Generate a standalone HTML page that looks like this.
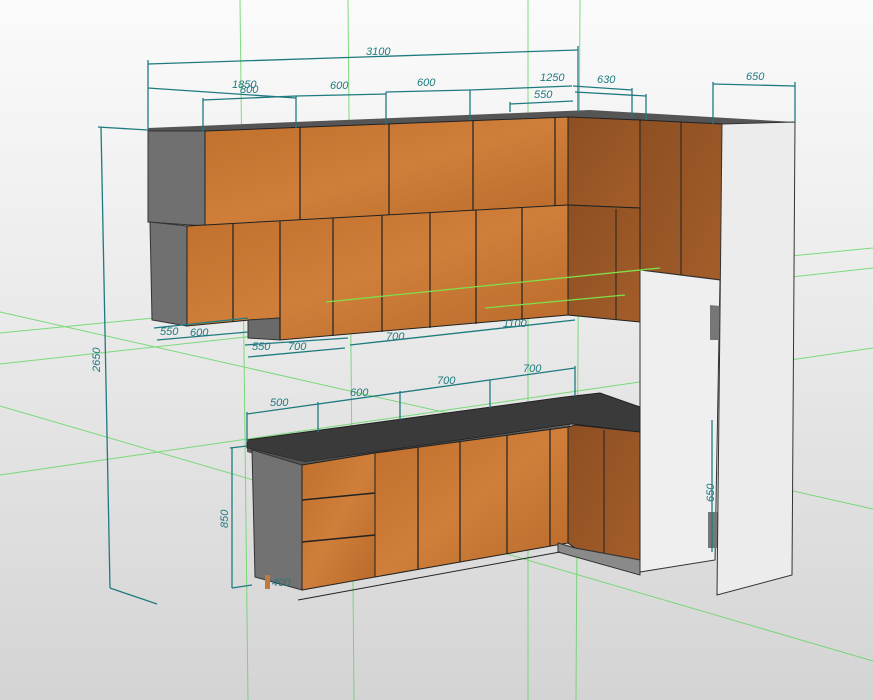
<!DOCTYPE html>
<html><head><meta charset="utf-8"><style>
html,body{margin:0;padding:0;width:873px;height:700px;overflow:hidden}
svg{display:block}
text{font-family:"Liberation Sans",sans-serif;font-size:11px;fill:#1f7a80;font-style:italic}
</style></head><body>
<svg width="873" height="700" viewBox="0 0 873 700" xmlns="http://www.w3.org/2000/svg">
<defs>
<linearGradient id="bg" x1="0" y1="0" x2="0" y2="1">
<stop offset="0" stop-color="#fbfbfb"/><stop offset="0.5" stop-color="#e8e8e8"/><stop offset="1" stop-color="#d4d4d4"/>
</linearGradient>
<linearGradient id="wood" x1="0" y1="0" x2="1" y2="1">
<stop offset="0" stop-color="#c06f2c"/><stop offset="0.5" stop-color="#cf7f3a"/><stop offset="1" stop-color="#b8692a"/>
</linearGradient>
<linearGradient id="woodd" x1="0" y1="0" x2="1" y2="1">
<stop offset="0" stop-color="#8d4f22"/><stop offset="1" stop-color="#a35d2a"/>
</linearGradient>
</defs>
<rect width="873" height="700" fill="url(#bg)"/>
<!-- green guide lines back -->
<g stroke="#5fd65f" stroke-width="1" fill="none" opacity="0.8">
<line x1="240" y1="0" x2="248" y2="700"/>
<line x1="348" y1="0" x2="354" y2="700"/>
<line x1="528" y1="0" x2="528" y2="700"/>
<line x1="580" y1="0" x2="576" y2="700"/>
<line x1="0" y1="312" x2="873" y2="509"/>
<line x1="0" y1="406" x2="873" y2="661"/>
<line x1="0" y1="333" x2="873" y2="248"/>
<line x1="0" y1="364" x2="873" y2="268"/>
<line x1="0" y1="475" x2="873" y2="348"/>
</g>
<!-- UPPER CABINETS -->
<polygon points="148,128 590,110 795,122 722,126 640,120 568,117 205,131 148,131" fill="#555"/>
<polygon points="148,131 205,131 205,226 148,222" fill="#707070" stroke="#333"/>
<polygon points="150,222 187,226 187,326 152,320" fill="#707070" stroke="#333"/>
<polygon points="205,131 568,117 568,205 205,226" fill="url(#wood)" stroke="#222"/>
<g stroke="#222" stroke-width="1.2">
<line x1="300" y1="127" x2="300" y2="221"/><line x1="389" y1="124" x2="389" y2="216"/>
<line x1="473" y1="120" x2="473" y2="211"/><line x1="555" y1="118" x2="555" y2="206"/>
</g>
<polygon points="187,226 568,205 568,315 280,340 280,318 250,320 187,326" fill="url(#wood)" stroke="#222"/>
<polygon points="248,320 280,318 280,340 248,338" fill="#6a6a6a" stroke="#333"/>
<g stroke="#222" stroke-width="1.2">
<line x1="233" y1="224" x2="233" y2="322"/><line x1="280" y1="221" x2="280" y2="340"/>
<line x1="333" y1="218" x2="333" y2="336"/><line x1="382" y1="215" x2="382" y2="332"/>
<line x1="430" y1="213" x2="430" y2="328"/><line x1="476" y1="210" x2="476" y2="324"/>
<line x1="522" y1="207" x2="522" y2="320"/>
</g>
<polygon points="568,117 640,120 640,208 568,205" fill="url(#woodd)" stroke="#222"/>
<polygon points="568,205 640,208 640,322 568,315" fill="url(#woodd)" stroke="#222"/>
<line x1="616" y1="209" x2="616" y2="320" stroke="#222"/>
<polygon points="640,120 722,124 722,280 640,270" fill="url(#woodd)" stroke="#222"/>
<line x1="681" y1="122" x2="681" y2="275" stroke="#222"/>
<!-- fridge column -->
<polygon points="640,270 720,280 715,560 640,572" fill="#efefef" stroke="#333"/>
<polygon points="710,305 720,306 720,340 710,340" fill="#777"/>
<polygon points="708,512 718,512 718,548 708,548" fill="#777"/>
<polygon points="722,124 795,122 792,575 717,595" fill="#ececec" stroke="#333"/>
<!-- BASE CABINETS -->
<polygon points="247,440 565,397 600,393 640,407 640,432 572,424 305,462 247,448" fill="#3a3a3a" stroke="#222"/>
<polygon points="247,448 305,462 570,425 570,428 305,468 247,452" fill="#555"/>
<polygon points="252,450 302,465 302,590 255,577" fill="#727272" stroke="#333"/>
<polygon points="302,465 375,453 375,577 302,590" fill="url(#wood)" stroke="#222"/>
<g stroke="#222" stroke-width="1.5"><line x1="302" y1="500" x2="375" y2="493"/><line x1="302" y1="542" x2="375" y2="535"/></g>
<polygon points="375,453 568,427 568,543 375,577" fill="url(#wood)" stroke="#222"/>
<g stroke="#222" stroke-width="1.2">
<line x1="418" y1="447" x2="418" y2="570"/><line x1="460" y1="441" x2="460" y2="562"/>
<line x1="507" y1="435" x2="507" y2="554"/><line x1="550" y1="429" x2="550" y2="546"/>
</g>
<polygon points="568,427 575,425 640,432 640,560 575,548 568,543" fill="url(#woodd)" stroke="#222"/>
<line x1="604" y1="430" x2="604" y2="555" stroke="#222"/>
<polygon points="558,543 575,548 640,560 640,575 558,552" fill="#8a8a8a" stroke="#333"/>
<polyline points="298,600 560,552" fill="none" stroke="#222"/>
<rect x="265" y="575" width="5" height="14" fill="#c07a3a"/>
<!-- dimension lines -->
<g stroke="#1f7a80" stroke-width="1.3" fill="none">
<line x1="148" y1="64" x2="578" y2="50"/><line x1="148" y1="60" x2="148" y2="130"/><line x1="578" y1="46" x2="578" y2="112"/>
<line x1="148" y1="88" x2="296" y2="98"/>
<line x1="203" y1="100" x2="296" y2="96"/><line x1="203" y1="98" x2="203" y2="132"/>
<line x1="296" y1="96" x2="386" y2="94"/><line x1="296" y1="96" x2="296" y2="128"/>
<line x1="386" y1="92" x2="470" y2="90"/><line x1="386" y1="92" x2="386" y2="124"/>
<line x1="470" y1="90" x2="572" y2="86"/><line x1="470" y1="90" x2="470" y2="120"/>
<line x1="510" y1="104" x2="573" y2="101"/><line x1="510" y1="102" x2="510" y2="112"/>
<line x1="573" y1="86" x2="632" y2="90"/><line x1="632" y1="88" x2="632" y2="118"/>
<line x1="575" y1="92" x2="646" y2="96"/><line x1="646" y1="94" x2="646" y2="120"/>
<line x1="713" y1="84" x2="795" y2="86"/><line x1="713" y1="82" x2="713" y2="124"/><line x1="795" y1="82" x2="795" y2="122"/>
<line x1="98" y1="127" x2="148" y2="130"/><line x1="101" y1="127" x2="110" y2="588"/><line x1="110" y1="588" x2="157" y2="604"/>
<line x1="154" y1="328" x2="248" y2="318"/><line x1="157" y1="340" x2="248" y2="332"/>
<line x1="245" y1="345" x2="348" y2="338"/><line x1="248" y1="357" x2="345" y2="348"/>
<line x1="350" y1="345" x2="575" y2="320"/>
<line x1="247" y1="414" x2="575" y2="368"/><line x1="247" y1="412" x2="247" y2="442"/>
<line x1="318" y1="402" x2="318" y2="432"/><line x1="400" y1="391" x2="400" y2="420"/>
<line x1="490" y1="380" x2="490" y2="408"/><line x1="575" y1="366" x2="575" y2="396"/>
<line x1="230" y1="448" x2="247" y2="446"/><line x1="232" y1="448" x2="232" y2="588"/><line x1="232" y1="588" x2="252" y2="585"/>
<line x1="712" y1="420" x2="712" y2="552"/>
</g>
<text x="366" y="55">3100</text>
<text x="232" y="88" font-size="10">1850</text><text x="240" y="93" font-size="10">800</text>
<text x="330" y="89">600</text><text x="417" y="86">600</text><text x="540" y="81">1250</text>
<text x="534" y="98">550</text><text x="597" y="83">630</text><text x="746" y="80">650</text>
<text x="270" y="406">500</text><text x="350" y="396">600</text><text x="437" y="384">700</text><text x="523" y="372">700</text>
<text x="160" y="335" font-size="10">550</text><text x="190" y="336" font-size="10">600</text>
<text x="252" y="350" font-size="10">550</text><text x="288" y="350" font-size="10">700</text>
<text x="386" y="340" font-size="10">700</text><text x="503" y="327" font-size="10">1100</text>
<text x="0" y="0" transform="translate(100,372) rotate(-90)">2650</text>
<text x="0" y="0" transform="translate(228,528) rotate(-90)">850</text>
<text x="0" y="0" transform="translate(714,502) rotate(-90)">650</text>
<text x="272" y="586" font-size="9">400</text>
<!-- green lines front -->
<g stroke="#7fe04a" stroke-width="1.3">
<line x1="326" y1="302" x2="660" y2="268"/><line x1="485" y1="308" x2="625" y2="295"/>
</g>
</svg>
</body></html>
